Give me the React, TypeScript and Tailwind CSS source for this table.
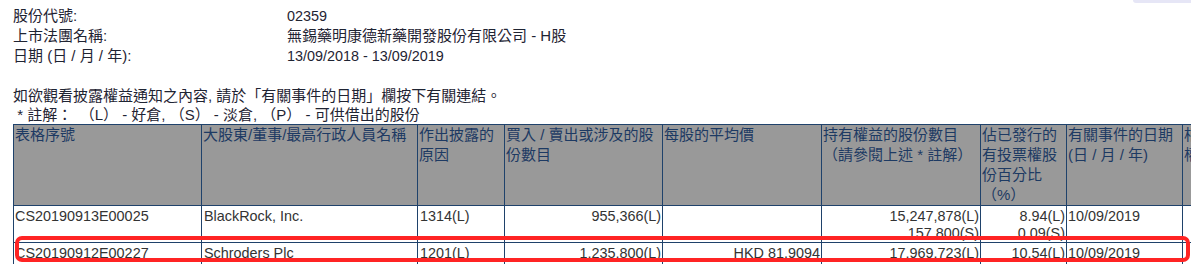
const font = "font-['Liberation_Sans','Noto_Sans_CJK_TC',sans-serif]";

// column widths measured from border to border
const cols = "grid-cols-[188px_216px_87px_158px_159px_159px_86px_116px_120px]";

const cell = "border-l border-b border-[#1f426b] px-[1px] overflow-hidden whitespace-nowrap";

export default function App() {
  const headers: string[][] = [
    ["表格序號"],
    ["大股東/董事/最高行政人員名稱"],
    ["作出披露的", "原因"],
    ["買入 / 賣出或涉及的股", "份數目"],
    ["每股的平均價"],
    ["持有權益的股份數目", "（請參閱上述 * 註解）"],
    ["佔已發行的", "有投票權股", "份百分比", "（%）"],
    ["有關事件的日期", "(日 / 月 / 年)"],
    ["相關法團", "權益"],
  ];

  const rows = [
    {
      id: "CS20190913E00025",
      name: "BlackRock, Inc.",
      reason: "1314(L)",
      qty: "955,366(L)",
      price: "",
      held: ["15,247,878(L)", "157,800(S)"],
      pct: ["8.94(L)", "0.09(S)"],
      date: "10/09/2019",
      h: "h-[37px]",
    },
    {
      id: "CS20190912E00227",
      name: "Schroders Plc",
      reason: "1201(L)",
      qty: "1,235,800(L)",
      price: "HKD 81.9094",
      held: ["17,969,723(L)"],
      pct: ["10.54(L)"],
      date: "10/09/2019",
      h: "h-[30px]",
    },
  ];

  return (
    <div className={`relative w-[1191px] h-[264px] overflow-hidden bg-white text-[14.4px] ${font}`}>
      {/* faint tab edge in the top right corner */}
      <div className="absolute right-0 top-0 w-[58px] h-[3px] rounded-bl-[3px] bg-[#e6e6f6]" />

      <div className="pl-[13px] pt-[6px] text-[#1f2433]">
        <div className="grid grid-cols-[274px_1fr] leading-[20px]">
          <div className="text-[15px]">股份代號:</div>
          <div>02359</div>
          <div className="text-[15px]">上市法團名稱:</div>
          <div className="text-[15px]">無錫藥明康德新藥開發股份有限公司 - H股</div>
          <div className="text-[15px]">日期 (日 / 月 / 年):</div>
          <div>13/09/2018 - 13/09/2019</div>
        </div>
        <div className="h-[20px]" />
        <div className="leading-[20px] text-[15px]">如欲觀看披露權益通知之內容, 請於「有關事件的日期」欄按下有關連結。</div>
        <div className="leading-[18px] text-[15px] whitespace-pre"> * 註解：　（L） - 好倉, （S） - 淡倉, （P） - 可供借出的股份</div>

        <div className={`grid ${cols} w-max border-t border-[#1f426b]`}>
          {headers.map((lines, i) => (
            <div key={i} className={`${cell} h-[81px] bg-[#999999] text-[#1d3a63] text-[15px] leading-[20px]`}>
              {lines.map((l) => (
                <div key={l}>{l}</div>
              ))}
            </div>
          ))}

          {rows.map((r) => (
            <div key={r.id} className="contents text-[#333333] leading-[17px]">
              <div className={`${cell} ${r.h} pt-[2px]`}>{r.id}</div>
              <div className={`${cell} ${r.h} pt-[2px] pl-[2px]`}>{r.name}</div>
              <div className={`${cell} ${r.h} pt-[2px] pl-[2px]`}>{r.reason}</div>
              <div className={`${cell} ${r.h} pt-[2px] text-right`}>{r.qty}</div>
              <div className={`${cell} ${r.h} pt-[2px] text-right`}>{r.price}</div>
              <div className={`${cell} ${r.h} pt-[2px] text-right`}>
                {r.held.map((v) => (
                  <div key={v}>{v}</div>
                ))}
              </div>
              <div className={`${cell} ${r.h} pt-[2px] text-right`}>
                {r.pct.map((v) => (
                  <div key={v}>{v}</div>
                ))}
              </div>
              <div className={`${cell} ${r.h} pt-[2px]`}>{r.date}</div>
              <div className={`${cell} ${r.h}`} />
            </div>
          ))}
        </div>
      </div>

      {/* red highlight drawn over the Schroders row */}
      <div className="absolute left-[15px] top-[236px] w-[1175px] h-[26px] rounded-[7px] border-[4px] border-[#ff2424]" />
    </div>
  );
}
